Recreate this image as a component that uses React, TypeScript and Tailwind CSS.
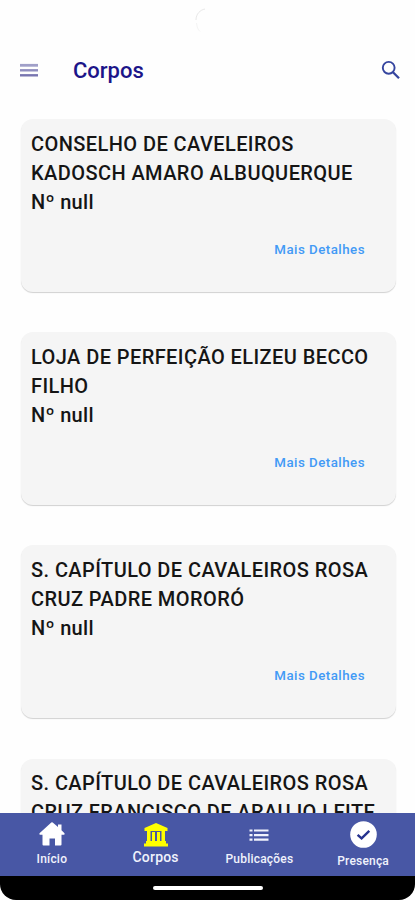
import type { ReactNode } from "react";

const bodies = [
  ["CONSELHO DE CAVELEIROS", "KADOSCH AMARO ALBUQUERQUE"],
  ["LOJA DE PERFEIÇÃO ELIZEU BECCO", "FILHO"],
  ["S. CAPÍTULO DE CAVALEIROS ROSA", "CRUZ PADRE MORORÓ"],
  ["S. CAPÍTULO DE CAVALEIROS ROSA", "CRUZ FRANCISCO DE ARAUJO LEITE"],
];

function HomeIcon() {
  return (
    <svg className="h-6 w-[26px]" viewBox="0 0 26 24" fill="currentColor">
      <path d="M12.3 0.6 Q13 0 13.7 0.6 L19 5 V2.5 H22.5 V8.2 L25.5 11.2 Q26 12.5 25 12.8 H22.5 V22.5 Q22.5 23.5 21.5 23.5 H16 V16.5 H10.5 V23.5 H4.5 Q3.5 23.5 3.5 22.5 V12.8 H1 Q0 12.5 0.5 11.2 Z" />
    </svg>
  );
}

function BankIcon() {
  return (
    <svg className="h-6 w-6" viewBox="0 0 24 24" fill="currentColor">
      <path d="M12 0 L23.5 5 V8 H0.5 V5 Z" />
      <path d="M3 8 H6.5 V18.5 H3 Z M8 9 H11 V18.5 H8 Z M13 9 H16 V18.5 H13 Z M17.5 8 H21 V18.5 H17.5 Z" />
      <path d="M2 18 H22 V20.5 H24 V23.5 H0 V20.5 H2 Z" />
    </svg>
  );
}

function ListIcon() {
  return (
    <svg className="h-3 w-5" viewBox="0 0 20 12" fill="currentColor">
      <path d="M0.5 0.5 H3.5 V2.5 H0.5 Z M5 0.5 H19.5 V2.5 H5 Z M0.5 5 H3.5 V7.2 H0.5 Z M5 5 H19.5 V7.2 H5 Z M0.5 9.5 H3.5 V11.7 H0.5 Z M5 9.5 H19.5 V11.7 H5 Z" />
    </svg>
  );
}

function CheckIcon() {
  return (
    <svg className="h-[27px] w-[27px]" viewBox="0 0 27 27">
      <circle cx="13.5" cy="13.5" r="13.3" fill="white" />
      <path d="M7.6 13.8 L11.6 17.4 L19.3 9.8" fill="none" stroke="#26338f" strokeWidth="2.4" />
    </svg>
  );
}

function Tab({ className, children }: { className: string; children: ReactNode }) {
  return <div className={`flex flex-1 flex-col items-center ${className}`}>{children}</div>;
}

function Card({ lines }: { lines: string[] }) {
  return (
    <article className="flex h-[173px] shrink-0 flex-col rounded-xl bg-[#f5f5f5] px-[10.5px] pt-[10.5px] shadow-[0_1px_1px_rgba(0,0,0,0.18)]">
      <h2 className="text-[20px] leading-[29.3px] font-medium tracking-[0.42px] whitespace-nowrap text-[#151515]">
        {lines.map((line) => (
          <span key={line} className="block">{line}</span>
        ))}
        <span className="block tracking-[0.3px]">Nº null</span>
      </h2>
      <button className="mt-[22.3px] mr-5 self-end text-[13.3px] leading-5 font-medium tracking-[0.48px] text-[#429af5]">
        Mais Detalhes
      </button>
    </article>
  );
}

export default function App() {
  return (
    <div className="flex h-[900px] w-[415px] flex-col overflow-hidden bg-[#fefefe] font-['Roboto',sans-serif]">
      <div className="h-[42px] shrink-0 pt-2 pl-[195px]">
        <svg className="h-6 w-6" viewBox="0 0 24 24" fill="none" stroke="#e8e8e8">
          <path d="M1 12 C1 6 5 2 10 1" />
          <path d="M1.5 15 C2 19 3 22 5 23.5" stroke="#f4f4f4" />
        </svg>
      </div>
      <header className="flex h-14 shrink-0 items-center pr-[14px] pl-5">
        <svg className="h-[14px] w-[18px]" viewBox="0 0 18 14">
          <path d="M0 2.3 H18" stroke="#a09fc8" strokeWidth="2.8" />
          <path d="M0 7.3 H18" stroke="#8f8dbf" strokeWidth="2.4" />
          <path d="M0 12.3 H18" stroke="#7875b0" strokeWidth="2.4" />
        </svg>
        <h1 className="ml-[35px] text-[22px] font-medium text-[#1c1589]">Corpos</h1>
        <svg className="ml-auto h-5 w-5" viewBox="0 0 20 20" fill="none" stroke="#35459f">
          <circle cx="7.7" cy="7.8" r="5.9" strokeWidth="1.9" />
          <path d="M12 12.2 L18 18.2" strokeWidth="2.3" />
        </svg>
      </header>
      <main className="flex min-h-0 flex-1 flex-col gap-[40.2px] overflow-hidden pt-[21px] pr-[19.5px] pl-[20.5px]">
        {bodies.map((lines) => (
          <Card key={lines.join(" ")} lines={lines} />
        ))}
      </main>
      <nav className="flex h-[63px] shrink-0 bg-[#4857a5] text-[12px] leading-4 font-medium text-[#f0f2fc]">
        <Tab className="gap-[5px] pt-[9px]">
          <span className="text-white"><HomeIcon /></span>
          <span className="tracking-[0.2px]">Início</span>
        </Tab>
        <Tab className="gap-0.5 pt-[10px] text-[14px]">
          <span className="text-[#ffff00]"><BankIcon /></span>
          <span className="tracking-[0.2px]">Corpos</span>
        </Tab>
        <Tab className="gap-[10px] pt-4">
          <ListIcon />
          <span className="tracking-[0.2px]">Publicações</span>
        </Tab>
        <Tab className="gap-[5px] pt-2">
          <CheckIcon />
          <span className="tracking-[0.2px]">Presença</span>
        </Tab>
      </nav>
      <footer className="flex h-6 shrink-0 justify-center rounded-b-[16px] bg-black pt-[10px]">
        <div className="h-1 w-[110px] rounded-full bg-white" />
      </footer>
    </div>
  );
}
